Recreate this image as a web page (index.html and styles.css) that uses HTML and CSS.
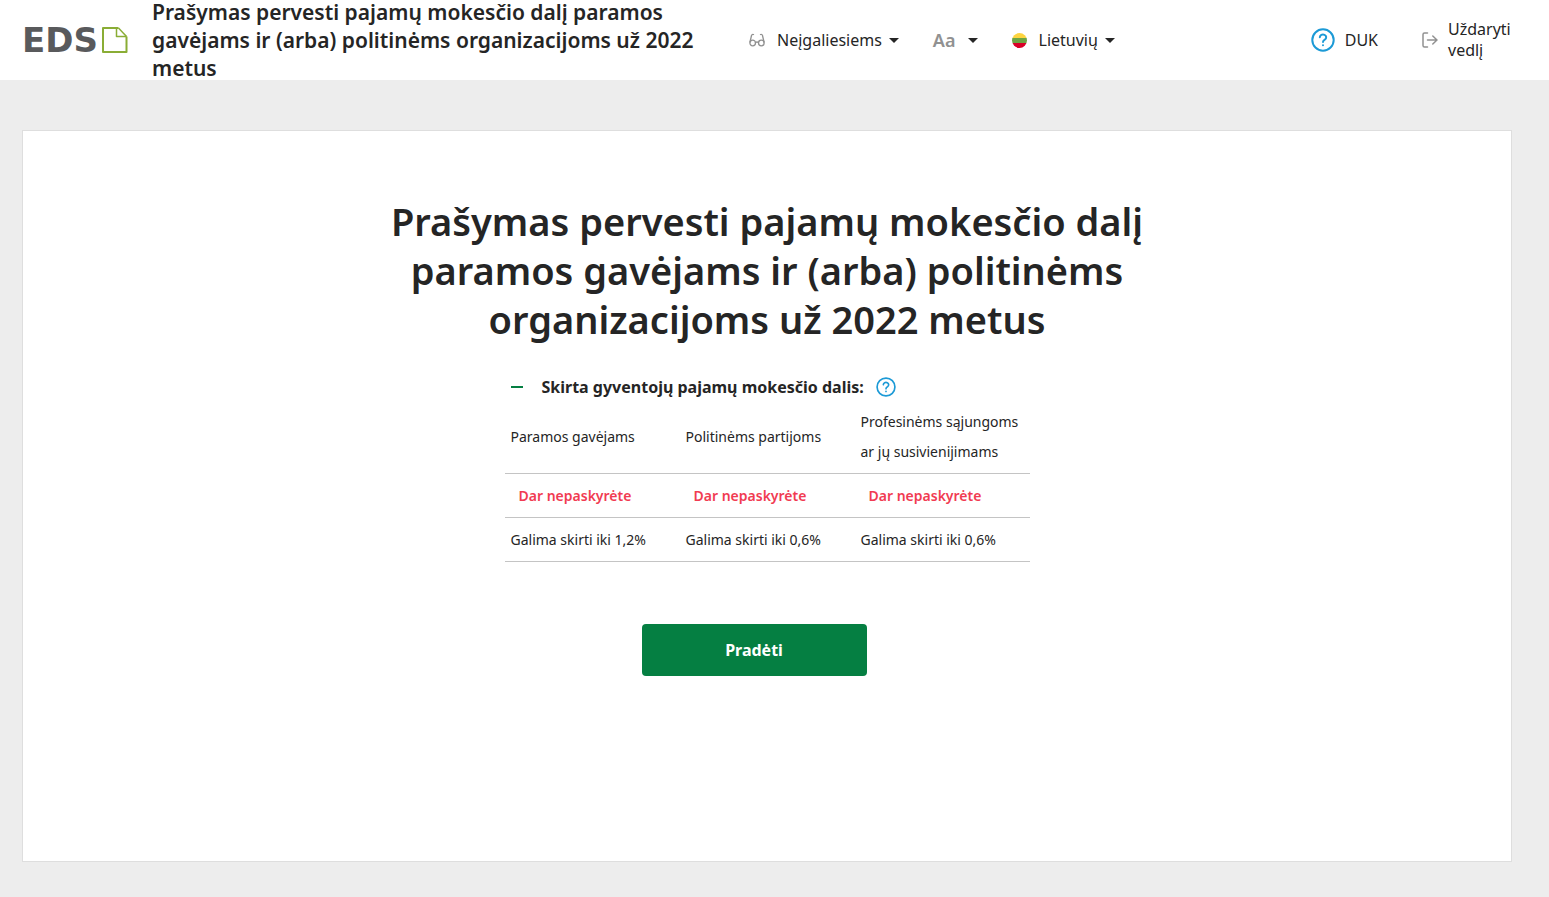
FILE: index.html
```html
<!DOCTYPE html>
<html lang="lt">
<head>
    <meta charset="UTF-8">
    <meta name="viewport" content="width=device-width, initial-scale=1.0">
    <title>EDS</title>
    <link rel="stylesheet" href="styles.css">
</head>
<body>
    <header class="header">
        <a class="logo" href="#">
            <span class="logo-text">EDS</span>
            <svg class="logo-icon" width="26" height="26" viewBox="0 0 26 26" fill="none" stroke="#8aad35" stroke-width="2" stroke-linejoin="round">
                <path d="M16.500 1H1v24h23.500V9.500"/>
                <path d="M14.500 1v8.500h10" stroke-width="1.500"/>
                <path d="M16.500 1l8 8.500" stroke-width="1.500"/>
            </svg>
        </a>
        <div class="header-title">Prašymas pervesti pajamų mokesčio dalį paramos gavėjams ir (arba) politinėms organizacijoms už 2022 metus</div>

        <nav class="tools">
            <button class="tool tool-access" type="button">
                <svg width="16" height="14" viewBox="0 0 16 14" fill="none" stroke="#919191" stroke-width="1.3" stroke-linecap="round">
                    <circle cx="3.7" cy="10" r="2.8"/>
                    <circle cx="12.3" cy="10" r="2.8"/>
                    <path d="M6.5 9.5q1.500-1 3 0M1 9L2.500 2.500Q3 1 4.500 1.500M15 9l-1.500-6.500Q13 1 11.500 1.500"/>
                </svg>
                <span>Neįgaliesiems</span>
                <span class="caret"></span>
            </button>
            <button class="tool tool-size" type="button" aria-label="Teksto dydis">
                <span class="font-size">Aa</span>
                <span class="caret"></span>
            </button>
            <button class="tool tool-lang" type="button">
                <span class="flag"></span>
                <span>Lietuvių</span>
                <span class="caret"></span>
            </button>
        </nav>

        <div class="links">
            <a class="link" href="#">
                <svg width="24" height="24" viewBox="0 0 24 24" fill="none" stroke="#1c9ad6" stroke-width="2" stroke-linecap="round">
                    <circle cx="12" cy="12" r="10.700"/>
                    <path d="M8.800 9.300a3.200 2.800 0 1 1 5 2.300Q12 12.600 12 14M12 17.200v.1"/>
                </svg>
                <span>DUK</span>
            </a>
            <a class="link link-close" href="#">
                <svg width="16" height="16" viewBox="0 0 16 16" fill="none" stroke="#919191" stroke-width="1.500" stroke-linecap="round" stroke-linejoin="round">
                    <path d="M5.500 1H2.500Q1 1 1 2.500v11Q1 15 2.500 15h3M5.500 8H15M10.800 4L15 8l-4.200 4"/>
                </svg>
                <span>Uždaryti vedlį</span>
            </a>
        </div>
    </header>

    <main class="main">
        <section class="card">
            <h1>Prašymas pervesti pajamų mokesčio dalį paramos gavėjams ir (arba) politinėms organizacijoms už 2022 metus</h1>

            <div class="summary">
                <div class="summary-header">
                    <button class="collapse" type="button" aria-label="Suskleisti"></button>
                    <h2>Skirta gyventojų pajamų mokesčio dalis:</h2>
                    <button class="help" type="button" aria-label="Pagalba">
                        <svg width="20" height="20" viewBox="0 0 24 24" fill="none" stroke="#1c9ad6" stroke-width="2" stroke-linecap="round">
                            <circle cx="12" cy="12" r="10.700"/>
                            <path d="M8.800 9.300a3.200 2.800 0 1 1 5 2.300Q12 12.600 12 14M12 17.200v.1"/>
                        </svg>
                    </button>
                </div>

                <table class="shares">
                    <thead>
                        <tr>
                            <th>Paramos gavėjams</th>
                            <th>Politinėms partijoms</th>
                            <th>Profesinėms sąjungoms ar jų susivienijimams</th>
                        </tr>
                    </thead>
                    <tbody>
                        <tr class="status">
                            <td>Dar nepaskyrėte</td>
                            <td>Dar nepaskyrėte</td>
                            <td>Dar nepaskyrėte</td>
                        </tr>
                        <tr>
                            <td>Galima skirti iki 1,2%</td>
                            <td>Galima skirti iki 0,6%</td>
                            <td>Galima skirti iki 0,6%</td>
                        </tr>
                    </tbody>
                </table>

                <div class="actions">
                    <button class="btn-start" type="button">Pradėti</button>
                </div>
            </div>
        </section>
    </main>
</body>
</html>
```
FILE: styles.css
```css
* {
    margin: 0;
    padding: 0;
    box-sizing: border-box;
}

body {
    display: flex;
    flex-direction: column;
    min-height: 100vh;
    font-family: "Noto Sans", sans-serif;
    font-size: 16px;
    color: #252525;
    background: #ededed;
}

button {
    font: inherit;
    color: inherit;
    background: none;
    border: none;
    cursor: pointer;
}

a {
    color: inherit;
    text-decoration: none;
}

svg {
    flex: none;
    display: block;
}

/* Header */
.header {
    display: flex;
    align-items: center;
    height: 80px;
    padding: 0 37px 0 22px;
    background: #fff;
}

.logo {
    display: flex;
    align-items: center;
    flex: none;
    width: 130px;
    gap: 4px;
}

.logo-text {
    font: bold 34px/34px "DejaVu Sans", sans-serif;
    color: #595a5c;
}

.header-title {
    width: 564px;
    font-size: 21px;
    font-weight: 600;
    line-height: 28px;
}

.tools {
    display: flex;
    align-items: center;
    gap: 34px;
    margin-left: 33px;
}

.tool {
    display: flex;
    align-items: center;
    gap: 12px;
    line-height: 21px;
    white-space: nowrap;
}

.caret {
    border: 5px solid transparent;
    border-top-color: #252525;
    border-bottom: none;
}

.tool-access .caret,
.tool-lang .caret {
    margin-left: -5px;
}

.font-size {
    font-size: 18px;
    font-weight: 600;
    color: #919191;
}

.flag {
    width: 15px;
    height: 15px;
    border-radius: 50%;
    background: linear-gradient(#fdd440 33%, #6da544 33% 66%, #d80027 66%);
}

.links {
    display: flex;
    align-items: center;
    gap: 44px;
    margin-left: auto;
}

.link {
    display: flex;
    align-items: center;
    gap: 10px;
    line-height: 21px;
}

.link-close span {
    width: 64px;
}

/* Content */
.main {
    display: flex;
    flex: 1;
    padding: 50px 37px 35px 22px;
}

.card {
    flex: 1;
    padding: 66px 24px 24px;
    background: #fff;
    border: 1px solid #dedede;
}

h1 {
    max-width: 780px;
    margin: 0 auto;
    font-size: 38px;
    font-weight: 600;
    line-height: 49px;
    text-align: center;
}

.summary {
    max-width: 525px;
    margin: 29px auto 0;
}

.summary-header {
    display: flex;
    align-items: center;
    height: 28px;
    padding-left: 6px;
}

.collapse {
    width: 12px;
    height: 20px;
    background: linear-gradient(#057f42, #057f42) center / 12px 2px no-repeat;
}

h2 {
    margin: 0 12px 0 19px;
    font-size: 16px;
    font-weight: 700;
    line-height: 28px;
}

.shares {
    width: 100%;
    table-layout: fixed;
    border-collapse: collapse;
    font-size: 14px;
    line-height: 30px;
}

.shares th,
.shares td {
    height: 44px;
    padding: 6px;
    font-weight: 400;
    text-align: left;
    border-bottom: 1px solid #c4c4c4;
}

.shares .status td {
    padding-left: 14px;
    font-weight: 600;
    color: #f13b52;
}

.actions {
    padding: 62px 26px 0 0;
    text-align: center;
}

.btn-start {
    width: 225px;
    height: 52px;
    font-size: 16px;
    font-weight: 700;
    color: #fff;
    background: #057f42;
    border-radius: 4px;
}
```
